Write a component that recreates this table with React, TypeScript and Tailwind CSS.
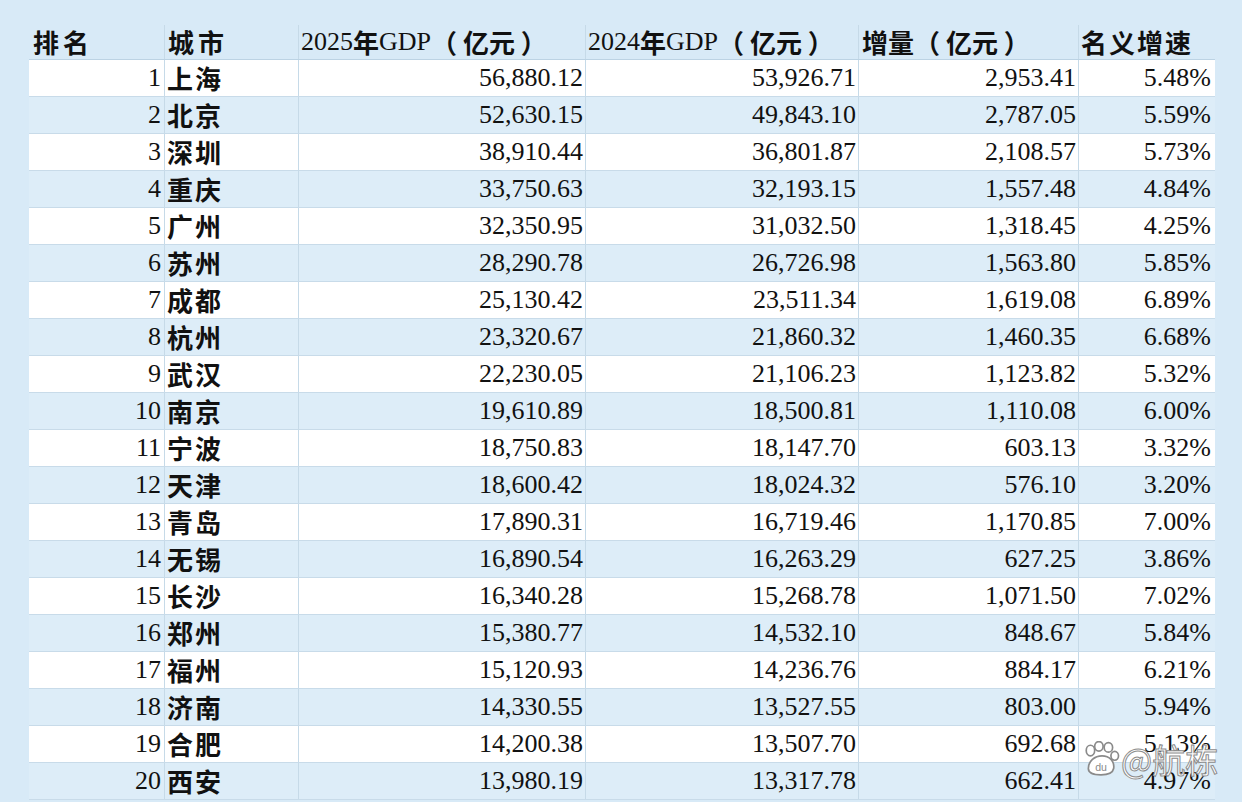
import React from "react";

type Row = [number, string, string, string, string, string];

const ROWS: Row[] = [
  [1, "上海", "56,880.12", "53,926.71", "2,953.41", "5.48%"],
  [2, "北京", "52,630.15", "49,843.10", "2,787.05", "5.59%"],
  [3, "深圳", "38,910.44", "36,801.87", "2,108.57", "5.73%"],
  [4, "重庆", "33,750.63", "32,193.15", "1,557.48", "4.84%"],
  [5, "广州", "32,350.95", "31,032.50", "1,318.45", "4.25%"],
  [6, "苏州", "28,290.78", "26,726.98", "1,563.80", "5.85%"],
  [7, "成都", "25,130.42", "23,511.34", "1,619.08", "6.89%"],
  [8, "杭州", "23,320.67", "21,860.32", "1,460.35", "6.68%"],
  [9, "武汉", "22,230.05", "21,106.23", "1,123.82", "5.32%"],
  [10, "南京", "19,610.89", "18,500.81", "1,110.08", "6.00%"],
  [11, "宁波", "18,750.83", "18,147.70", "603.13", "3.32%"],
  [12, "天津", "18,600.42", "18,024.32", "576.10", "3.20%"],
  [13, "青岛", "17,890.31", "16,719.46", "1,170.85", "7.00%"],
  [14, "无锡", "16,890.54", "16,263.29", "627.25", "3.86%"],
  [15, "长沙", "16,340.28", "15,268.78", "1,071.50", "7.02%"],
  [16, "郑州", "15,380.77", "14,532.10", "848.67", "5.84%"],
  [17, "福州", "15,120.93", "14,236.76", "884.17", "6.21%"],
  [18, "济南", "14,330.55", "13,527.55", "803.00", "5.94%"],
  [19, "合肥", "14,200.38", "13,507.70", "692.68", "5.13%"],
  [20, "西安", "13,980.19", "13,317.78", "662.41", "4.97%"],
];

const GRID = "grid w-[1186px] grid-cols-[135px_134px_287px_273px_220px_137px]";
const SERIF = "font-['Liberation_Serif','Noto_Sans_CJK_SC',serif]";
const CJK = "font-['Noto_Sans_CJK_SC',sans-serif] font-bold";

function Paw() {
  return (
    <svg width="38" height="36" viewBox="0 0 36 34" className="shrink-0">
      <g fill="#ffffff" stroke="#8a8a8a" strokeWidth="1.6">
        <ellipse cx="8" cy="9" rx="4" ry="5" />
        <ellipse cx="16" cy="5" rx="4" ry="4.5" />
        <ellipse cx="25" cy="6" rx="4" ry="4.5" />
        <ellipse cx="31" cy="14" rx="3.6" ry="4.2" />
        <path d="M6 26 C6 19 12 14 19 14 C26 14 31 19 30 26 C29 31 24 32 18 32 C11 32 6 31 6 26 Z" />
      </g>
      <text
        x="18"
        y="28"
        textAnchor="middle"
        fontSize="10"
        fontFamily="Liberation Sans, sans-serif"
        fill="#8a8a8a"
      >
        du
      </text>
    </svg>
  );
}

export default function App() {
  return (
    <div className="relative h-[802px] w-[1242px] overflow-hidden bg-[#d8eaf7] pl-[29px] pt-[25px] text-[#111]">
      {/* header */}
      <div className={`${GRID} h-[35px] border-b border-[#bcd3e4] text-[26px] leading-none`}>
        <div className={`${CJK} flex items-center pl-[4px] tracking-[4px]`}>排名</div>
        <div className={`${CJK} flex items-center border-l border-[#c6dae8] pl-[3px] tracking-[4px]`}>城市</div>
        <div className={`${SERIF} flex items-center border-l border-[#c6dae8] pl-[2px]`}>
          2025<span className={CJK}>年</span>GDP<span className={CJK}>（ 亿元 ）</span>
        </div>
        <div className={`${SERIF} flex items-center border-l border-[#c6dae8] pl-[2px]`}>
          2024<span className={CJK}>年</span>GDP<span className={CJK}>（ 亿元 ）</span>
        </div>
        <div className={`${CJK} flex items-center border-l border-[#c6dae8] pl-[3px]`}>增量（ 亿元 ）</div>
        <div className={`${CJK} flex items-center border-l border-[#c6dae8] pl-[2px] tracking-[2px]`}>名义增速</div>
      </div>

      {/* rows */}
      {ROWS.map((r, i) => (
        <div
          key={r[0]}
          className={`${GRID} h-[37px] border-b border-[#c8dbe9] text-[26px] leading-none ${
            i % 2 === 0 ? "bg-white" : "bg-[#ddedf8]"
          }`}
        >
          <div className={`${SERIF} flex items-center justify-end pr-[3px]`}>{r[0]}</div>
          <div className={`${CJK} flex items-center border-l border-[#c6dae8] pl-[2px] tracking-[2px]`}>{r[1]}</div>
          <div className={`${SERIF} flex items-center justify-end border-l border-[#c6dae8] pr-[2px]`}>{r[2]}</div>
          <div className={`${SERIF} flex items-center justify-end border-l border-[#c6dae8] pr-[2px]`}>{r[3]}</div>
          <div className={`${SERIF} flex items-center justify-end border-l border-[#c6dae8] pr-[2px]`}>{r[4]}</div>
          <div className={`${SERIF} flex items-center justify-end border-l border-[#c6dae8] pr-[4px]`}>{r[5]}</div>
        </div>
      ))}

      {/* watermark */}
      <div className="absolute left-[1082px] top-[741px] flex items-center gap-[1px]">
        <Paw />
        <span className="font-['Noto_Sans_CJK_SC',sans-serif] text-[33px] leading-none text-white [-webkit-text-stroke:1px_#8c8c8c]">
          @航栋
        </span>
      </div>
    </div>
  );
}
